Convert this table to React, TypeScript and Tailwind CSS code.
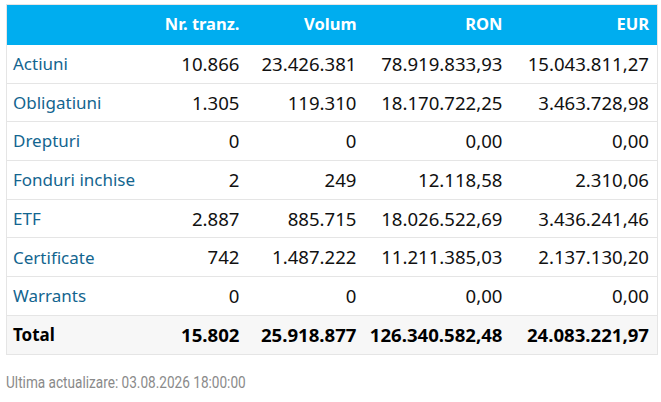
const rows = [
  { name: 'Actiuni', nr: '10.866', vol: '23.426.381', ron: '78.919.833,93', eur: '15.043.811,27' },
  { name: 'Obligatiuni', nr: '1.305', vol: '119.310', ron: '18.170.722,25', eur: '3.463.728,98' },
  { name: 'Drepturi', nr: '0', vol: '0', ron: '0,00', eur: '0,00' },
  { name: 'Fonduri inchise', nr: '2', vol: '249', ron: '12.118,58', eur: '2.310,06' },
  { name: 'ETF', nr: '2.887', vol: '885.715', ron: '18.026.522,69', eur: '3.436.241,46' },
  { name: 'Certificate', nr: '742', vol: '1.487.222', ron: '11.211.385,03', eur: '2.137.130,20' },
  { name: 'Warrants', nr: '0', vol: '0', ron: '0,00', eur: '0,00' },
];

export default function App() {
  return (
    <div className="min-h-[402px] bg-white pl-1.5 pt-1 font-['Noto_Sans',sans-serif]">
      <table className="w-[651px] table-fixed border-collapse border border-[#e5e5e5] text-[18.6px]">
        <colgroup>
          <col className="w-[154px]" />
          <col className="w-[87px]" />
          <col className="w-[117px]" />
          <col className="w-[146px]" />
          <col className="w-[147px]" />
        </colgroup>
        <thead>
          <tr className="h-10 bg-[#00adef] text-right text-[16.5px] font-bold text-white">
            <th />
            <th className="pr-2">Nr. tranz.</th>
            <th className="pr-2">Volum</th>
            <th className="pr-2">RON</th>
            <th className="pr-2">EUR</th>
          </tr>
        </thead>
        <tbody>
          {rows.map((r) => (
            <tr key={r.name} className="h-[38.7px] border-b border-[#e5e5e5] text-right text-[#111]">
              <td className="pl-[6px] text-left text-[17px] text-[#13658f]">{r.name}</td>
              <td className="pr-2">{r.nr}</td>
              <td className="pr-2">{r.vol}</td>
              <td className="pr-2">{r.ron}</td>
              <td className="pr-2">{r.eur}</td>
            </tr>
          ))}
          <tr className="h-[39px] bg-[#f7f7f7] text-right font-bold text-black">
            <td className="pl-[6px] text-left text-[17px]">Total</td>
            <td className="pr-2">15.802</td>
            <td className="pr-2">25.918.877</td>
            <td className="pr-2">126.340.582,48</td>
            <td className="pr-2">24.083.221,97</td>
          </tr>
        </tbody>
      </table>
      <p className="mt-[15px] text-[16px] text-[#8a8a8a]">
        <span className="inline-block origin-left scale-x-[0.85] whitespace-nowrap font-['Roboto',sans-serif]">
          Ultima actualizare: 03.08.2026 18:00:00
        </span>
      </p>
    </div>
  );
}
